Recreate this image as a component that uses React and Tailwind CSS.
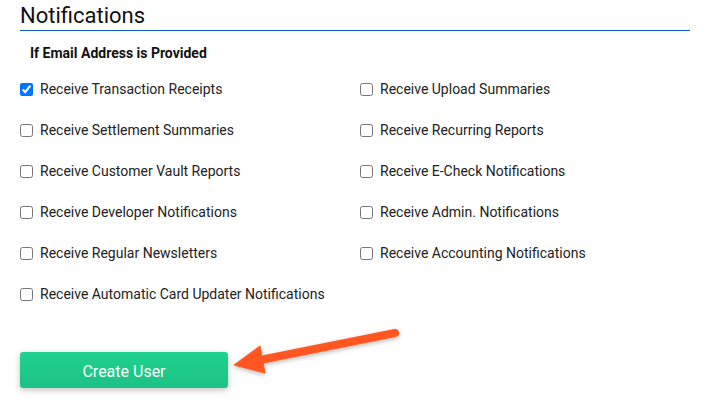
import React from "react";

const leftItems = [
  { label: "Receive Transaction Receipts", checked: true },
  { label: "Receive Settlement Summaries" },
  { label: "Receive Customer Vault Reports" },
  { label: "Receive Developer Notifications" },
  { label: "Receive Regular Newsletters" },
  { label: "Receive Automatic Card Updater Notifications" },
];

const rightItems = [
  { label: "Receive Upload Summaries" },
  { label: "Receive Recurring Reports" },
  { label: "Receive E-Check Notifications" },
  { label: "Receive Admin. Notifications" },
  { label: "Receive Accounting Notifications" },
];

const CheckRow = ({ label, checked }) => (
  <label className="flex items-center h-[41px] text-[14px] text-[#222]">
    <input
      type="checkbox"
      defaultChecked={checked}
      className="m-0 w-[13px] h-[13px] accent-[#0075ff]"
    />
    <span className="ml-[7px]">{label}</span>
  </label>
);

const App = () => {
  return (
    <div
      className="relative w-[721px] h-[414px] bg-white overflow-hidden px-5"
      style={{ fontFamily: "Roboto, 'Liberation Sans', sans-serif" }}
    >
      <div className="w-[670px] border-b border-[#0a5fc0] pt-[3px] pb-[1px]">
        <h2 className="text-[22px] leading-[26px] text-[#111]">Notifications</h2>
      </div>

      <p className="pl-[10px] mt-[14px] text-[14px] font-bold text-[#111] leading-[16px]">
        If Email Address is Provided
      </p>

      <div className="mt-[8px] grid grid-cols-[340px_340px]">
        <div className="flex flex-col">
          {leftItems.map((el, index) => (
            <CheckRow key={index} {...el} />
          ))}
        </div>
        <div className="flex flex-col">
          {rightItems.map((el, index) => (
            <CheckRow key={index} {...el} />
          ))}
        </div>
      </div>

      <button className="mt-[37px] w-[208px] h-[36px] pt-[3px] rounded-[3px] bg-gradient-to-b from-[#20d18f] to-[#1cc285] text-white text-[16px] shadow-[0_2px_6px_rgba(0,0,0,0.25)]">
        Create User
      </button>

      {/* annotation arrow */}
      <svg
        className="absolute left-0 top-0 pointer-events-none"
        width="721"
        height="414"
        viewBox="0 0 721 414"
      >
        <defs>
          <filter id="sh" x="-20%" y="-20%" width="140%" height="160%">
            <feDropShadow dx="0" dy="2" stdDeviation="2" floodColor="#000" floodOpacity="0.25" />
          </filter>
        </defs>
        <g filter="url(#sh)" fill="#ff5722" stroke="#ff5722">
          <line x1="395" y1="333" x2="255" y2="361" strokeWidth="8" strokeLinecap="round" />
          <polygon points="234,365 260,346 265,373" strokeWidth="1" strokeLinejoin="round" />
        </g>
      </svg>
    </div>
  );
};

export default App;
